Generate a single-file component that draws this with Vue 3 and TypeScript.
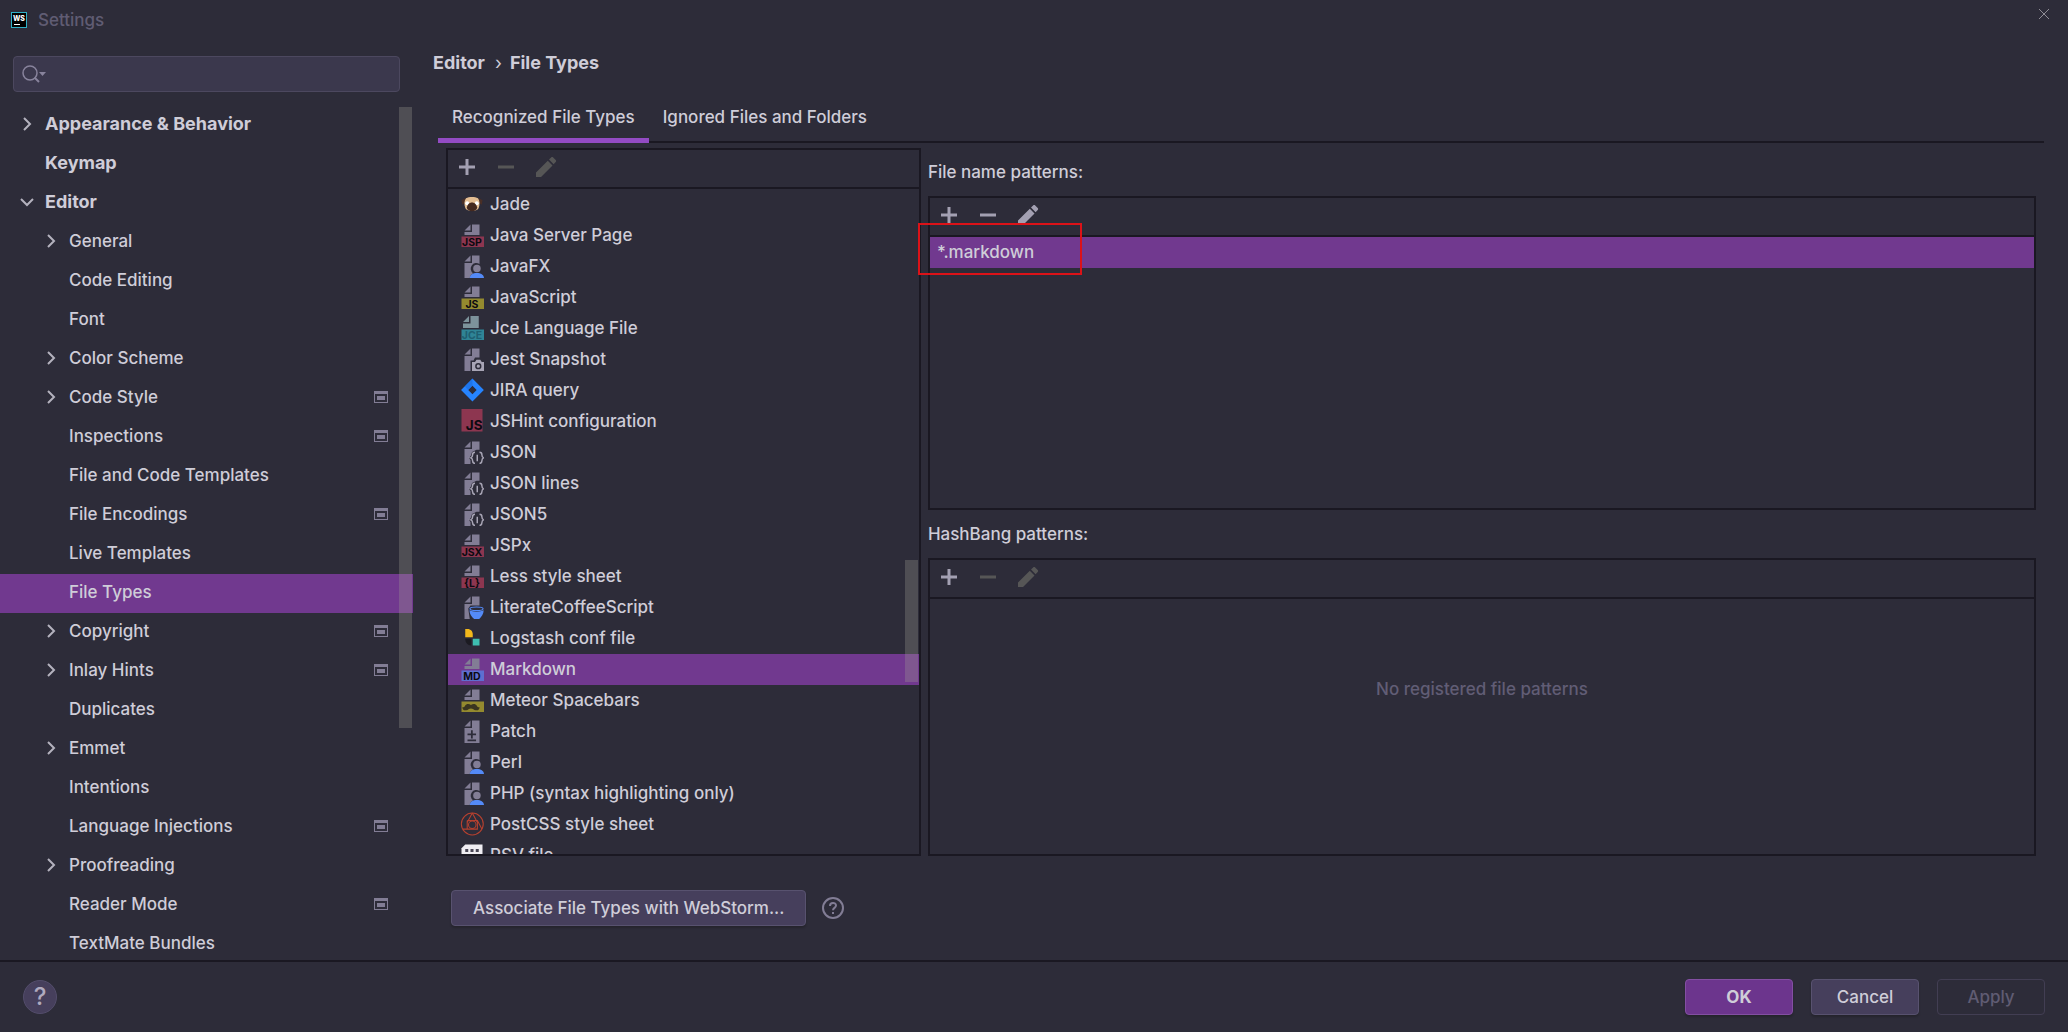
<script setup lang="ts">
import { ref } from 'vue'

interface TreeItem {
  label: string
  level: 0 | 1
  arrow?: 'open' | 'closed'
  project?: boolean
}

interface FileType {
  label: string
  icon: string
  tag?: string
  color?: string
}

const tree: TreeItem[] = [
  { label: 'Appearance & Behavior', level: 0, arrow: 'closed' },
  { label: 'Keymap', level: 0 },
  { label: 'Editor', level: 0, arrow: 'open' },
  { label: 'General', level: 1, arrow: 'closed' },
  { label: 'Code Editing', level: 1 },
  { label: 'Font', level: 1 },
  { label: 'Color Scheme', level: 1, arrow: 'closed' },
  { label: 'Code Style', level: 1, arrow: 'closed', project: true },
  { label: 'Inspections', level: 1, project: true },
  { label: 'File and Code Templates', level: 1 },
  { label: 'File Encodings', level: 1, project: true },
  { label: 'Live Templates', level: 1 },
  { label: 'File Types', level: 1 },
  { label: 'Copyright', level: 1, arrow: 'closed', project: true },
  { label: 'Inlay Hints', level: 1, arrow: 'closed', project: true },
  { label: 'Duplicates', level: 1 },
  { label: 'Emmet', level: 1, arrow: 'closed' },
  { label: 'Intentions', level: 1 },
  { label: 'Language Injections', level: 1, project: true },
  { label: 'Proofreading', level: 1, arrow: 'closed' },
  { label: 'Reader Mode', level: 1, project: true },
  { label: 'TextMate Bundles', level: 1 },
]

const fileTypes: FileType[] = [
  { label: 'Jade', icon: 'jade' },
  { label: 'Java Server Page', icon: 'tag', tag: 'JSP', color: '#8d3650' },
  { label: 'JavaFX', icon: 'user' },
  { label: 'JavaScript', icon: 'tag', tag: 'JS', color: '#948a2f' },
  { label: 'Jce Language File', icon: 'jce' },
  { label: 'Jest Snapshot', icon: 'camera' },
  { label: 'JIRA query', icon: 'jira' },
  { label: 'JSHint configuration', icon: 'jshint' },
  { label: 'JSON', icon: 'json' },
  { label: 'JSON lines', icon: 'json' },
  { label: 'JSON5', icon: 'json' },
  { label: 'JSPx', icon: 'tag', tag: 'JSX', color: '#8d3650' },
  { label: 'Less style sheet', icon: 'tag', tag: '{L}', color: '#8d3650' },
  { label: 'LiterateCoffeeScript', icon: 'coffee' },
  { label: 'Logstash conf file', icon: 'logstash' },
  { label: 'Markdown', icon: 'tag', tag: 'MD', color: '#5e6fd0' },
  { label: 'Meteor Spacebars', icon: 'meteor', color: '#948a2f' },
  { label: 'Patch', icon: 'patch' },
  { label: 'Perl', icon: 'user' },
  { label: 'PHP (syntax highlighting only)', icon: 'user' },
  { label: 'PostCSS style sheet', icon: 'postcss' },
  { label: 'PSV file', icon: 'psv' },
]

const page = ref('File Types')
const selectedType = ref('Markdown')
const query = ref('')
</script>

<template>
  <div class="window">
    <header class="titlebar">
      <svg class="logo" viewBox="0 0 16 16" aria-hidden="true">
        <rect width="16" height="16" fill="#2fb0c7" />
        <rect x="1" y="1" width="14" height="14" fill="#000" />
        <text x="8" y="9" text-anchor="middle" class="logo-text">WS</text>
        <rect x="3" y="12" width="6" height="1" fill="#fff" />
      </svg>
      <h1>Settings</h1>
      <button class="close" aria-label="Close">
        <svg viewBox="0 0 12 12"><path d="M1 1 11 11M11 1 1 11" /></svg>
      </button>
    </header>

    <div class="body">
      <aside class="sidebar">
        <label class="search">
          <svg viewBox="0 0 26 20" aria-hidden="true">
            <circle cx="9" cy="9" r="7" />
            <path d="M13.500 13.500 18 18" class="handle" />
            <path d="M18 8h7l-3.500 4z" class="caret" />
          </svg>
          <input v-model="query" type="text" aria-label="Search settings" />
        </label>
        <div class="tree-wrap">
          <ul class="tree" role="tree">
            <li
              v-for="item in tree"
              :key="item.label"
              role="treeitem"
              :class="{ nested: item.level === 1, selected: item.label === page }"
              @click="page = item.label"
            >
              <span class="arrow">
                <svg v-if="item.arrow" viewBox="0 0 14 14" :class="item.arrow">
                  <path d="M4 1 10 7 4 13" />
                </svg>
              </span>
              <span class="name">{{ item.label }}</span>
              <svg v-if="item.project" class="project" viewBox="0 0 14 12" aria-hidden="true">
                <path fill-rule="evenodd" d="M0 0h14v12H0zM1 3v8h12V3z" />
                <rect x="3" y="5" width="8" height="4" />
              </svg>
            </li>
          </ul>
          <div class="scrollbar"></div>
        </div>
      </aside>

      <main class="main">
        <nav class="crumbs"><span>Editor</span><span class="sep">›</span><span>File Types</span></nav>
        <div class="tabs" role="tablist">
          <button role="tab" aria-selected="true" class="tab active">Recognized File Types</button>
          <button role="tab" aria-selected="false" class="tab">Ignored Files and Folders</button>
        </div>

        <div class="content">
          <section class="panel types">
            <div class="toolbar">
              <button aria-label="Add"><svg viewBox="0 0 24 24"><path d="M10.500 4h3v6.500H20v3h-6.500V20h-3v-6.500H4v-3h6.500z" /></svg></button>
              <button aria-label="Remove" disabled><svg viewBox="0 0 24 24"><path d="M4 10.500h16v3H4z" /></svg></button>
              <button aria-label="Edit" disabled><svg viewBox="0 0 24 24"><path d="M3 17.500V22h5L19.500 10.500 14.800 5.800zM16 4.600 20.600 9.200 22.700 7c.6-.6.6-1.500 0-2.100L20.200 2.500c-.6-.6-1.500-.6-2.100 0z" /></svg></button>
            </div>
            <div class="list-wrap">
              <ul class="list" role="listbox">
                <li
                  v-for="type in fileTypes"
                  :key="type.label"
                  role="option"
                  :aria-selected="type.label === selectedType"
                  :class="{ selected: type.label === selectedType }"
                  @click="selectedType = type.label"
                >
                  <svg class="ficon" viewBox="0 0 16 16" aria-hidden="true">
                    <template v-if="type.icon === 'tag' || type.icon === 'meteor'">
                      <path class="paper" d="M7 1 3 5h4zM8 1v5H3v2h10V1z" />
                      <rect x="1" y="9" width="15" height="7" :fill="type.color" />
                      <text v-if="type.tag" x="8" y="15" text-anchor="middle" class="tag">{{ type.tag }}</text>
                      <path v-else d="M1.600 12.600c.8.500 1.200.100 1.700-.6.9-1.500 2.600-1.700 4-.6 1.400-1.100 3.100-.9 4 .6.5.7.9 1.100 1.700.6.1 1.600-1 2.500-2.500 2.200-1.300-.2-1.900-1.200-3.200-1.200s-1.900 1-3.200 1.200c-1.500.3-2.600-.6-2.500-2.200z" fill="#3a3520" />
                    </template>
                    <template v-else-if="type.icon === 'jce'">
                      <path d="M6 0 2 4h4zM7 0v5H2v3h10.500V0z" fill="#7d939b" />
                      <rect x="1" y="9" width="15" height="7" fill="#2f8496" />
                      <text x="8" y="15" text-anchor="middle" class="tag jce">JCE</text>
                    </template>
                    <template v-else-if="type.icon === 'user'">
                      <path class="paper" d="M7 1 3 5h4z" />
                      <path class="paper" d="M8 1v5H3v10h3.500c.2-1.500 1-2.500 2.200-3.200A3.600 3.600 0 0 1 13 6.700V1z" />
                      <circle class="paper" cx="11.300" cy="9.600" r="2.500" />
                      <path d="M6.500 16c.2-2.200 2-3.300 4.700-3.300S15.800 13.800 16 16z" fill="#548af7" />
                    </template>
                    <template v-else-if="type.icon === 'camera'">
                      <path class="paper" d="M7 1 3 5h4zM8 1v5H3v10h4V9h2l1-2h3V1z" />
                      <path d="M8 10h2l1-1.500h2.500l1 1.500H16v6H8z" fill="#a8a5b5" />
                      <circle cx="12.200" cy="12.800" r="1.600" fill="#a8a5b5" stroke="#2d2c39" />
                    </template>
                    <template v-else-if="type.icon === 'jira'">
                      <path fill-rule="evenodd" d="M8.300.4 15.900 8l-7.600 7.600L.7 8zM8.300 5.200 5.500 8l2.800 2.800L11.100 8z" fill="#2684ff" />
                      <path d="M8.300.4v4.800L5.500 8 3.200 5.500z" fill="#1565d8" opacity=".5" />
                    </template>
                    <template v-else-if="type.icon === 'jshint'">
                      <rect x="1" width="14" height="15" fill="#8d3650" />
                      <text x="15" y="14" text-anchor="end" class="tag big">JS</text>
                    </template>
                    <template v-else-if="type.icon === 'json'">
                      <path class="paper" d="M7 1 3 5h4zM8 1v5H3v10h4v-2.500L6 12l1.200-1.500L8 8l3-1.500h2V1z" />
                      <path class="brace" d="M10 8.200c-1.500 0-1.600.6-1.600 1.700 0 1-.2 1.700-1.200 2 1 .3 1.200 1 1.200 2 0 1.200.2 1.700 1.600 1.700M13 8.200c1.500 0 1.600.6 1.600 1.700 0 1 .1 1.700 1.100 2-1 .3-1.100 1-1.100 2 0 1.200-.2 1.700-1.600 1.700M11.500 9.800v4.400" />
                    </template>
                    <template v-else-if="type.icon === 'coffee'">
                      <path class="paper" d="M7 1 3 5h4zM8 1v5H3v10h3.500L5.500 9 7 7h6V1z" />
                      <ellipse cx="11" cy="9.200" rx="4.400" ry="1.200" fill="none" stroke="#548af7" stroke-width=".7" />
                      <path d="M6.300 10.200c2.500 1.200 7 1.200 9.500 0-.1 2.500-1.500 4.600-3 5.800H9.400c-1.700-1.200-3-3.300-3.100-5.800z" fill="#548af7" />
                    </template>
                    <template v-else-if="type.icon === 'logstash'">
                      <path d="M3.500 2h1.500c2.200 0 3.500 1.600 3.500 3.500v2h-5z" fill="#f3b81b" />
                      <path d="M3.500 8.500h4V13C5 13 3.500 11 3.500 8.500z" fill="#1c1b22" />
                      <path d="M8.500 8.500H13V13H8.500z" fill="#3ebeb0" />
                    </template>
                    <template v-else-if="type.icon === 'patch'">
                      <path class="paper" fill-rule="evenodd" d="M7 1 3 5h4zM8 1v5H3v10h10V1zM7.300 7.500h1.200v2.200h2.200v1.200H8.500v2.100H7.300v-2.100H5V9.700h2.300zM5 13.600h5.700v1.200H5z" />
                    </template>
                    <template v-else-if="type.icon === 'jade'">
                      <path d="M3.500 4 1 5.500 1.500 8.500 4 7zM12.500 4 15 5.500 14.500 8.500 12 7z" fill="#4a2f26" />
                      <path d="M4 4.200C6 3 10 3 12 4.200c1.200 1.500 1.400 4.500.4 6.600-1.200 2.300-7.600 2.300-8.800 0-1-2.100-.8-5.100.4-6.600z" fill="#e3bd92" />
                      <circle cx="4.800" cy="7.500" r="1.300" fill="#fff" />
                      <circle cx="11.200" cy="7.500" r="1.300" fill="#fff" />
                      <path d="M4.500 10.500C4.800 8.500 6.200 7 8 7s3.200 1.500 3.500 3.500C11 13.500 5 13.500 4.500 10.500z" fill="#44291f" />
                    </template>
                    <template v-else-if="type.icon === 'postcss'">
                      <g fill="none" stroke="#b8412f" stroke-width=".7">
                        <circle cx="8.200" cy="8" r="7.300" />
                        <path d="M8.200.7 4.800 7M8.200.7 11.600 7M4.800 5.600h6.800v5.800H1.900M4.800 5.600v5.800M11.600 5.600l3 5.800" />
                        <circle cx="8.200" cy="8.500" r="2.500" />
                      </g>
                    </template>
                    <template v-else>
                      <path d="M3.500 1H15v14H1V3.500z" fill="#efedf2" />
                      <path d="M3.500 4h2v2h-2zM7 4h2v2H7zM10.500 4h2v2h-2zM3.500 7.500h2v2h-2zM7 7.500h2v2H7zM10.500 7.500h2v2h-2z" fill="#4a4756" />
                    </template>
                  </svg>
                  <span>{{ type.label }}</span>
                </li>
              </ul>
              <div class="scrollbar"></div>
            </div>
          </section>

          <div class="patterns">
            <h2>File name patterns:</h2>
            <section class="panel">
              <div class="toolbar">
                <button aria-label="Add"><svg viewBox="0 0 24 24"><path d="M10.500 4h3v6.500H20v3h-6.500V20h-3v-6.500H4v-3h6.500z" /></svg></button>
                <button aria-label="Remove"><svg viewBox="0 0 24 24"><path d="M4 10.500h16v3H4z" /></svg></button>
                <button aria-label="Edit"><svg viewBox="0 0 24 24"><path d="M3 17.500V22h5L19.500 10.500 14.800 5.800zM16 4.600 20.600 9.200 22.700 7c.6-.6.6-1.500 0-2.100L20.200 2.500c-.6-.6-1.500-.6-2.100 0z" /></svg></button>
              </div>
              <ul class="list pattern-list">
                <li class="selected">*.markdown<span class="marker"></span></li>
              </ul>
            </section>
            <h2>HashBang patterns:</h2>
            <section class="panel">
              <div class="toolbar">
                <button aria-label="Add"><svg viewBox="0 0 24 24"><path d="M10.500 4h3v6.500H20v3h-6.500V20h-3v-6.500H4v-3h6.500z" /></svg></button>
                <button aria-label="Remove" disabled><svg viewBox="0 0 24 24"><path d="M4 10.500h16v3H4z" /></svg></button>
                <button aria-label="Edit" disabled><svg viewBox="0 0 24 24"><path d="M3 17.500V22h5L19.500 10.500 14.800 5.800zM16 4.600 20.600 9.200 22.700 7c.6-.6.6-1.500 0-2.100L20.200 2.500c-.6-.6-1.500-.6-2.100 0z" /></svg></button>
              </div>
              <p class="empty">No registered file patterns</p>
            </section>
          </div>
        </div>

        <div class="associate">
          <button class="btn wide">Associate File Types with WebStorm...</button>
          <button class="hint" aria-label="About associations">
            <svg viewBox="0 0 22 22">
              <circle cx="11" cy="11" r="10" />
              <path d="M8 9c0-4 6-4 6-.4 0 2.200-3 2.400-3 4.600M11 15v2" />
            </svg>
          </button>
        </div>
      </main>
    </div>

    <footer class="footer">
      <button class="help" aria-label="Help">?</button>
      <div class="actions">
        <button class="btn primary">OK</button>
        <button class="btn">Cancel</button>
        <button class="btn" disabled>Apply</button>
      </div>
    </footer>
  </div>
</template>

<style>
body {
  margin: 0;
  background: #2d2c39;
}
</style>

<style scoped>
.window {
  --line: #1a1822;
  --select: #71398f;
  --text: #cfcdd8;
  display: flex;
  flex-direction: column;
  height: 100vh;
  overflow: hidden;
  background: #2d2c39;
  color: var(--text);
  font: 500 17px/24px Inter, "Noto Sans", sans-serif;
}

* {
  box-sizing: border-box;
}

button {
  padding: 0;
  border: 0;
  background: none;
  color: inherit;
  font: inherit;
}

svg {
  display: block;
  flex: none;
}

ul {
  margin: 0;
  padding: 0;
  list-style: none;
}

.titlebar {
  display: flex;
  flex: none;
  align-items: center;
  height: 40px;
  padding: 0 18px 0 11px;
}

.logo {
  width: 16px;
  height: 16px;
}

.logo-text {
  fill: #fff;
  font: 800 7px Inter, sans-serif;
}

.titlebar h1 {
  flex: 1;
  margin: 0 0 0 11px;
  color: #605c73;
  font: inherit;
}

.close {
  align-self: flex-start;
  margin-top: 8px;
}

.close svg {
  width: 12px;
  height: 12px;
  fill: none;
  stroke: #8f8d96;
}

.body {
  display: flex;
  flex: 1;
  min-height: 0;
}

.sidebar {
  display: flex;
  flex: none;
  flex-direction: column;
  width: 413px;
  padding-top: 16px;
}

.search {
  display: flex;
  flex: none;
  align-items: center;
  height: 36px;
  margin: 0 13px 14px;
  padding: 0 7px;
  border: 1px solid #4c485f;
  border-radius: 4px;
  background: #3b384d;
}

.search svg {
  width: 26px;
  height: 20px;
  fill: none;
  stroke: #88839c;
}

.search circle {
  stroke-width: 1.500;
}

.search .handle {
  stroke-width: 2;
}

.search .caret {
  fill: #88839c;
  stroke: none;
}

.search input {
  flex: 1;
  min-width: 0;
  border: 0;
  outline: 0;
  background: none;
  color: inherit;
  font: inherit;
}

.tree-wrap {
  position: relative;
  flex: 1;
  min-height: 0;
}

.tree {
  height: 100%;
  overflow: hidden;
}

.tree li {
  display: flex;
  align-items: center;
  height: 39px;
  padding: 0 25px 3px 20px;
  font-size: 18px;
  font-weight: 700;
}

.tree .nested {
  padding-left: 44px;
  font-size: 17px;
  font-weight: 500;
}

.selected {
  background: var(--select);
}

.arrow {
  width: 14px;
  margin-right: 11px;
}

.arrow svg {
  width: 14px;
  height: 14px;
  fill: none;
  stroke: #b4b2be;
  stroke-width: 2;
}

.arrow .open {
  transform: rotate(90deg);
}

.name {
  flex: 1;
}

.project {
  width: 14px;
  height: 12px;
  fill: #827d95;
}

.scrollbar {
  position: absolute;
  top: 1px;
  right: 1px;
  width: 13px;
  height: 621px;
  background: rgba(160, 160, 150, 0.3);
}

.main {
  display: flex;
  flex: 1;
  flex-direction: column;
  min-width: 0;
  padding: 11px 24px 34px 20px;
}

.crumbs {
  flex: none;
  font-size: 18px;
  font-weight: 700;
}

.sep {
  margin: 0 8px 0 10px;
  font-weight: 400;
}

.tabs {
  display: flex;
  flex: none;
  margin: 21px 0 0 5px;
  box-shadow: inset 0 -2px var(--line);
}

.tab {
  padding: 9px 14px;
  border-bottom: 5px solid transparent;
}

.tab.active {
  border-color: #934bc4;
}

.content {
  display: grid;
  flex: 1;
  grid-template-columns: 3fr 7fr;
  gap: 7px;
  min-height: 0;
  margin: 5px 8px 0 13px;
}

.panel {
  display: flex;
  flex-direction: column;
  min-height: 0;
  border: 2px solid var(--line);
}

.toolbar {
  display: flex;
  flex: none;
  align-items: flex-start;
  gap: 15px;
  height: 39px;
  padding: 5px 7px;
  border-bottom: 2px solid var(--line);
}

.toolbar svg {
  width: 24px;
  height: 24px;
  fill: #a3a0b2;
}

.toolbar :disabled svg {
  fill: #565656;
}

.list-wrap {
  position: relative;
  flex: 1;
  min-height: 0;
}

.list {
  height: 100%;
  overflow: hidden;
}

.list li {
  display: flex;
  align-items: center;
  gap: 6px;
  height: 31px;
  padding: 0 0 1px 12px;
}

.list-wrap .scrollbar {
  top: auto;
  bottom: 172px;
  height: 122px;
}

.ficon {
  width: 24px;
  height: 24px;
}

.paper {
  fill: #827d95;
}

.brace {
  fill: none;
  stroke: #a8a5b5;
}

.tag {
  fill: #0c0a10;
  font: 700 7px Inter, sans-serif;
}

.tag.big {
  font-size: 9px;
}

.tag.jce {
  fill: #1f5f72;
}

.patterns {
  display: grid;
  grid-template-rows: auto 157fr auto 149fr;
  min-width: 0;
  min-height: 0;
}

.patterns h2 {
  margin: 12px 0;
  font: inherit;
}

.list.pattern-list {
  overflow: visible;
}

.pattern-list .selected {
  position: relative;
  padding-left: 7px;
}

.marker {
  position: absolute;
  top: -14px;
  left: -12px;
  width: 164px;
  height: 52px;
  border: 2px solid #dc1218;
  pointer-events: none;
}

.empty {
  margin: 78px 0 0;
  color: #615d75;
  text-align: center;
}

.associate {
  display: flex;
  flex: none;
  align-items: center;
  gap: 16px;
  margin: 34px 0 0 18px;
}

.btn {
  width: 108px;
  height: 36px;
  border: 1px solid #58526f;
  border-radius: 4px;
  background: #463f5c;
  box-shadow: 0 2px 2px rgba(20, 20, 20, 0.3);
}

.btn.wide {
  width: auto;
  padding: 0 21px;
}

.btn.primary {
  border-color: #834fa2;
  background: #6c358d;
  font-weight: 700;
}

.btn:disabled {
  border-color: #423e53;
  background: none;
  box-shadow: none;
  color: #605c73;
}

.hint svg {
  width: 22px;
  height: 22px;
  fill: none;
  stroke: #827d95;
  stroke-width: 2;
}

.footer {
  display: flex;
  flex: none;
  align-items: center;
  justify-content: space-between;
  height: 72px;
  padding: 0 23px;
  border-top: 2px solid var(--line);
}

.help {
  width: 34px;
  height: 34px;
  border: 1px solid #534d6b;
  border-radius: 50%;
  background: #463f5c;
  color: #b0aabf;
  font-size: 24px;
}

.actions {
  display: flex;
  gap: 18px;
}
</style>
